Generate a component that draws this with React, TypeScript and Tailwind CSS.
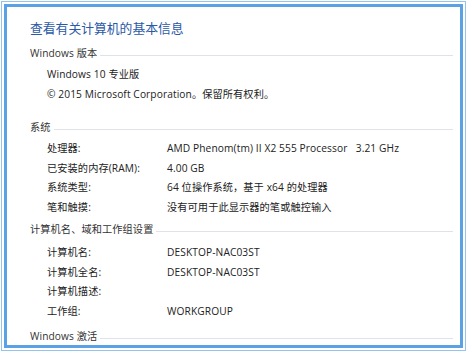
import React from 'react';

interface InfoRow {
  label: string;
  value: string;
}

const systemRows: InfoRow[] = [
  { label: '处理器:', value: 'AMD Phenom(tm) II X2 555 Processor   3.21 GHz' },
  { label: '已安装的内存(RAM):', value: '4.00 GB' },
  { label: '系统类型:', value: '64 位操作系统，基于 x64 的处理器' },
  { label: '笔和触摸:', value: '没有可用于此显示器的笔或触控输入' },
];

const computerRows: InfoRow[] = [
  { label: '计算机名:', value: 'DESKTOP-NAC03ST' },
  { label: '计算机全名:', value: 'DESKTOP-NAC03ST' },
  { label: '计算机描述:', value: '' },
  { label: '工作组:', value: 'WORKGROUP' },
];

const SectionHeader: React.FC<{ title: string; className?: string }> = ({ title, className }) => (
  <div className={`flex h-[20px] items-center pr-[4px] ${className ?? ''}`}>
    <span className="whitespace-nowrap text-[#333]">{title}</span>
    <div className="ml-[3px] mt-[3px] h-px flex-1 bg-[#dfe3e8]" />
  </div>
);

const Row: React.FC<InfoRow> = ({ label, value }) => (
  <div className="flex h-[19.5px] items-center pl-[17px]">
    <span className="w-[120px] whitespace-nowrap">{label}</span>
    <span className="whitespace-pre">{value}</span>
  </div>
);

export default function App() {
  return (
    <div
      className="h-[361px] w-[472px] bg-white pl-[1px] pt-[1px] text-[10.2px] tracking-[0.1px] text-[#222]"
      style={{ fontFamily: '"Open Sans", "Noto Sans CJK SC", sans-serif' }}
    >
      <div className="h-[350px] w-[465px] border border-[#92c4ee] p-[2px]">
        <div className="h-full overflow-hidden border-[3px] border-[#5ba2e5] bg-white pl-[23px] pr-[3px] pt-[12px]">
          <div className="flex h-[20px] items-center text-[12.8px] tracking-normal text-[#2a5aa6]">
            查看有关计算机的基本信息
          </div>

          <SectionHeader title="Windows 版本" className="mt-[5px]" />
          <div className="mt-px flex h-[20px] items-center pl-[17px]">Windows 10 专业版</div>
          <div className="flex h-[20px] items-center pl-[17px]">
            © 2015 Microsoft Corporation。保留所有权利。
          </div>

          <SectionHeader title="系统" className="mt-[13px]" />
          <div className="mt-px">
            {systemRows.map(row => (
              <Row key={row.label} label={row.label} value={row.value} />
            ))}
          </div>

          <SectionHeader title="计算机名、域和工作组设置" className="mt-[3px]" />
          <div className="mt-[3px]">
            {computerRows.map(row => (
              <Row key={row.label} label={row.label} value={row.value} />
            ))}
          </div>

          <SectionHeader title="Windows 激活" className="mt-[6px]" />
        </div>
      </div>
    </div>
  );
}
